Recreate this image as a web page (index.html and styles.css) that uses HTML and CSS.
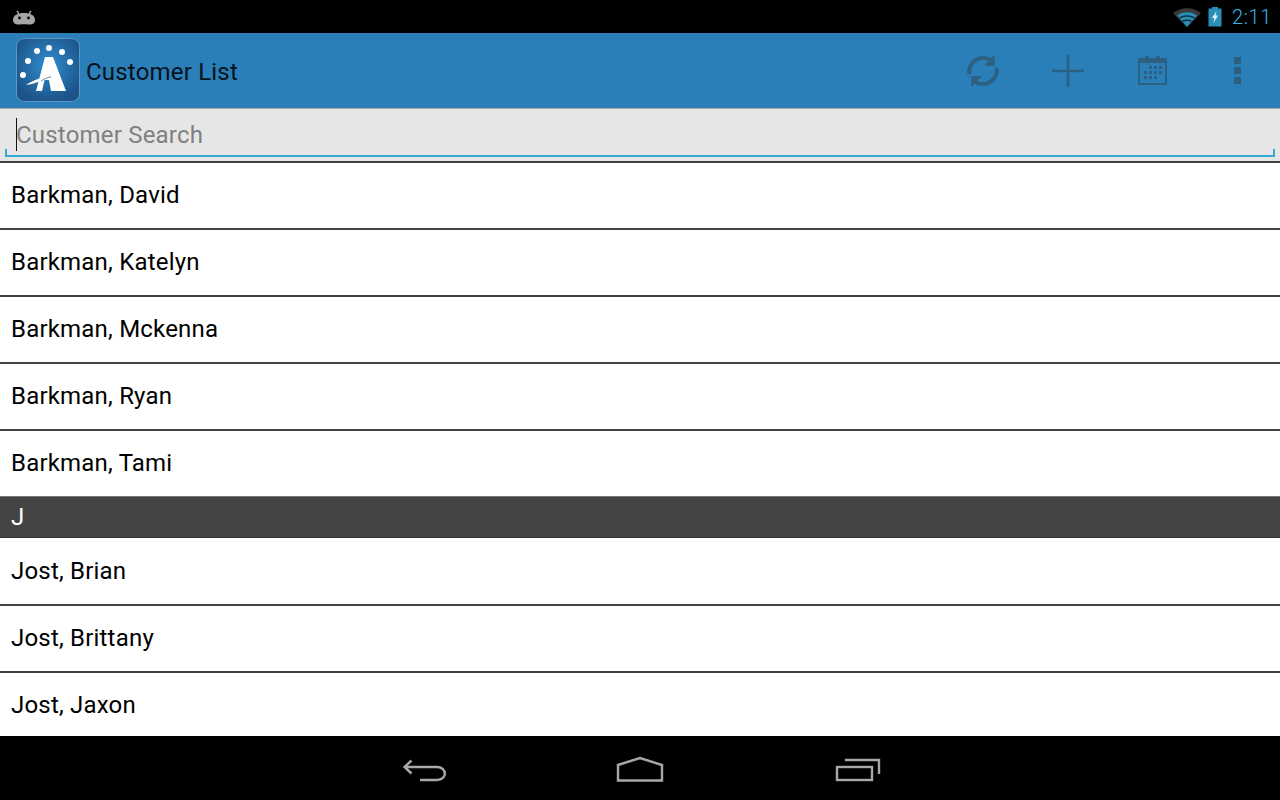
FILE: index.html
```html
<!DOCTYPE html>
<html lang="en">
<head>
    <meta charset="UTF-8">
    <meta name="viewport" content="width=device-width, initial-scale=1.0">
    <title>Customer List</title>
    <link rel="stylesheet" href="styles.css">
</head>
<body>
    <div class="screen">
        <div class="status-bar">
            <svg class="android-icon" width="24" height="18" viewBox="0 0 24 18">
                <path d="M5 3 L7 6 M19 3 L17 6" stroke="#a6a6a6" stroke-width="1.4" fill="none"/>
                <path d="M1 12 C1 7 6 5 12 5 C18 5 23 7 23 12 C23 16 19 17 16 16.5 C13 16 11 16 8 16.5 C5 17 1 16 1 12 Z" fill="#a6a6a6"/>
                <circle cx="7.5" cy="10" r="1.4" fill="#000"/>
                <circle cx="16.5" cy="10" r="1.4" fill="#000"/>
            </svg>
            <div class="status-right">
                <svg width="28" height="22" viewBox="0 0 28 22">
                    <path d="M0 7 C8 0.500 20 0.500 28 7 L14 21 Z" fill="#3a3a3a"/>
                    <path d="M4 9.5 C10 5 18 5 24 9.500 L14 21 Z" fill="#2a8fb8"/>
                    <path d="M6 11.500 C11 8.500 17 8.500 22 11.500 L21 12.800 C16.500 10.200 11.500 10.200 7 12.800 Z" fill="#0b2f3f"/>
                    <path d="M9 14.800 C12 13 16 13 19 14.800 L18 16 C15.500 14.700 12.500 14.700 10 16 Z" fill="#0b2f3f"/>
                </svg>
                <svg width="14" height="20" viewBox="0 0 14 20">
                    <rect x="4" y="0" width="6" height="2" fill="#2a8fb8"/>
                    <rect x="0.500" y="1.500" width="13" height="18" fill="#2a8fb8"/>
                    <path d="M8.500 4 L4 11 H6.500 L5.500 16 L10 8.500 H7.500 Z" fill="#e4f2f8"/>
                </svg>
                <span class="clock">2:11</span>
            </div>
        </div>

        <div class="action-bar">
            <svg class="app-logo" width="64" height="64" viewBox="0 0 64 64">
                <defs>
                    <radialGradient id="logo-bg" cx="50%" cy="42%" r="60%">
                        <stop offset="0" stop-color="#2f8fd0"/>
                        <stop offset="1" stop-color="#1c5287"/>
                    </radialGradient>
                </defs>
                <rect x="0.500" y="0.500" width="63" height="63" rx="8" fill="url(#logo-bg)" stroke="#5b9ac6"/>
                <g fill="#fff">
                    <circle cx="7" cy="37" r="3"/>
                    <circle cx="12" cy="23" r="3"/>
                    <circle cx="21" cy="13" r="3"/>
                    <circle cx="33" cy="10" r="3"/>
                    <circle cx="46" cy="14" r="3"/>
                    <circle cx="54" cy="24" r="3"/>
                    <path d="M29 19 H37 L50 53 H35 L33 42 H28.500 L26 53 H20 Z"/>
                    <path d="M10 47 C17 42 26 39 36 38 C30 40 26 42 22 44 C18 45.500 14 46.500 10 47 Z"/>
                </g>
                <path d="M25 43 C28 41 31 39.800 35 38.800" stroke="#2a6fa8" stroke-width="0.8" fill="none"/>
            </svg>
            <div class="app-title">Customer List</div>
            <div class="actions">
                <div class="action-btn">
                    <svg width="36" height="36" viewBox="0 0 34 34" fill="none" stroke="#2d5f80" stroke-width="3.800">
                        <path d="M4 20 A13.500 13.500 0 0 1 25 7"/>
                        <path d="M30 14 A13.500 13.500 0 0 1 9 27"/>
                        <path d="M28 2 V12 H18 Z M6 32 V22 H16 Z" fill="#2d5f80" stroke="none"/>
                    </svg>
                </div>
                <div class="action-btn">
                    <svg width="32" height="32" viewBox="0 0 32 32" stroke="#2d5f80" stroke-width="2.600">
                        <path d="M16 0 V32 M0 16 H32"/>
                    </svg>
                </div>
                <div class="action-btn">
                    <svg width="29" height="29" viewBox="0 0 29 29">
                        <rect x="1" y="3" width="27" height="25" fill="none" stroke="#2d5f80" stroke-width="2"/>
                        <rect x="1" y="3" width="27" height="4" fill="#2d5f80"/>
                        <rect x="7" y="0" width="4" height="6" rx="1" fill="#2d5f80"/>
                        <rect x="18" y="0" width="4" height="6" rx="1" fill="#2d5f80"/>
                        <g fill="#2d5f80">
                            <rect x="11" y="10" width="3" height="3"/><rect x="16" y="10" width="3" height="3"/><rect x="21" y="10" width="3" height="3"/>
                            <rect x="6" y="15" width="3" height="3"/><rect x="11" y="15" width="3" height="3"/><rect x="16" y="15" width="3" height="3"/><rect x="21" y="15" width="3" height="3"/>
                            <rect x="6" y="20" width="3" height="3"/><rect x="11" y="20" width="3" height="3"/><rect x="16" y="20" width="3" height="3"/>
                        </g>
                    </svg>
                </div>
                <div class="action-btn">
                    <div class="overflow-dots"><span></span><span></span><span></span></div>
                </div>
            </div>
        </div>

        <div class="search-area">
            <div class="search-field">
                <span class="caret"></span>
                <span class="placeholder">Customer Search</span>
            </div>
        </div>

        <div class="customer-list">
            <div class="row">Barkman, David</div>
            <div class="row">Barkman, Katelyn</div>
            <div class="row">Barkman, Mckenna</div>
            <div class="row">Barkman, Ryan</div>
            <div class="row">Barkman, Tami</div>
            <div class="section-header">J</div>
            <div class="row">Jost, Brian</div>
            <div class="row">Jost, Brittany</div>
            <div class="row">Jost, Jaxon</div>
        </div>

        <div class="nav-bar">
            <svg width="44" height="24" viewBox="0 0 44 24" fill="none" stroke="#a8a8a8" stroke-width="2.400">
                <path d="M8.500 2.500 L1.500 9 L8.500 15.500 M1.500 9 H34 C44.500 9 44.500 22 34 22 H17"/>
            </svg>
            <svg class="nav-home" width="46" height="24" viewBox="0 0 46 24" fill="none" stroke="#a8a8a8" stroke-width="2.400">
                <path d="M1 7 L23 0 L45 7 V22.500 H1 Z"/>
            </svg>
            <svg class="nav-recents" width="44" height="24" viewBox="0 0 44 24" fill="none" stroke="#a8a8a8" stroke-width="2.400">
                <rect x="1" y="9" width="35" height="13"/>
                <path d="M9 2 H43 V16"/>
            </svg>
        </div>
    </div>
</body>
</html>
```

FILE: styles.css
```css
html, body { margin: 0; padding: 0; }
body { font-family: Roboto, "Liberation Sans", sans-serif; background: #fff; color: #000; }

.screen { width: 1280px; height: 800px; display: flex; flex-direction: column; overflow: hidden; }

.status-bar { height: 33px; background: #000; display: flex; align-items: center; justify-content: space-between; padding: 0 8px 0 12px; flex-shrink: 0; }
.status-right { display: flex; align-items: center; gap: 7px; }
.clock { color: #33b5e5; font-size: 20px; font-weight: 300; letter-spacing: 0.6px; margin-left: 3px; }

.action-bar { height: 76px; background: #2a7fb9; display: flex; align-items: center; padding-left: 16px; flex-shrink: 0; box-sizing: border-box; border-bottom: 1px solid #a9a9a9; }
.app-logo { margin-top: -2px; }
.app-title { font-size: 24px; margin-left: 6px; padding-top: 2px; letter-spacing: 0.2px; color: #06121c; }
.actions { margin-left: auto; display: flex; }
.action-btn { width: 85px; height: 75px; display: flex; align-items: center; justify-content: center; }
.overflow-dots { display: flex; flex-direction: column; gap: 3px; }
.overflow-dots span { width: 7px; height: 7px; background: #2d5f80; display: block; }

.search-area { height: 52px; background: #e6e6e6; padding: 0 5px; box-sizing: border-box; flex-shrink: 0; }
.search-field { height: 48px; box-sizing: border-box; position: relative; border-bottom: 2px solid #33a9d4; padding: 5px 0 0 11px; display: flex; align-items: center; }
.search-field::before, .search-field::after { content: ""; position: absolute; bottom: 0; width: 2px; height: 6px; background: #33a9d4; }
.search-field::before { left: 0; }
.search-field::after { right: 0; }
.caret { position: absolute; left: 11px; top: 9px; width: 1px; height: 33px; background: #111; }
.placeholder { font-size: 24px; color: #808080; letter-spacing: 0.2px; }

.customer-list { flex: 1; overflow: hidden; background: #fff; }
.row { height: 67px; box-sizing: border-box; border-top: 2px solid #424242; padding: 0 0 2px 11px; display: flex; align-items: center; font-size: 24px; letter-spacing: 0.2px; }
.section-header { height: 42px; box-sizing: border-box; background: #444; border-top: 1px solid #777; border-bottom: 1px solid #333; color: #fff; font-size: 24px; padding-left: 11px; display: flex; align-items: center; }
.section-header + .row { border-top: 0; height: 66px; padding-bottom: 0; }

.nav-bar { height: 64px; background: #000; flex-shrink: 0; display: flex; align-items: flex-start; justify-content: center; gap: 170px; padding: 22px 0 0 3px; box-sizing: border-box; }
.nav-bar svg { overflow: visible; }
.nav-recents { margin-left: 3px; }
```
